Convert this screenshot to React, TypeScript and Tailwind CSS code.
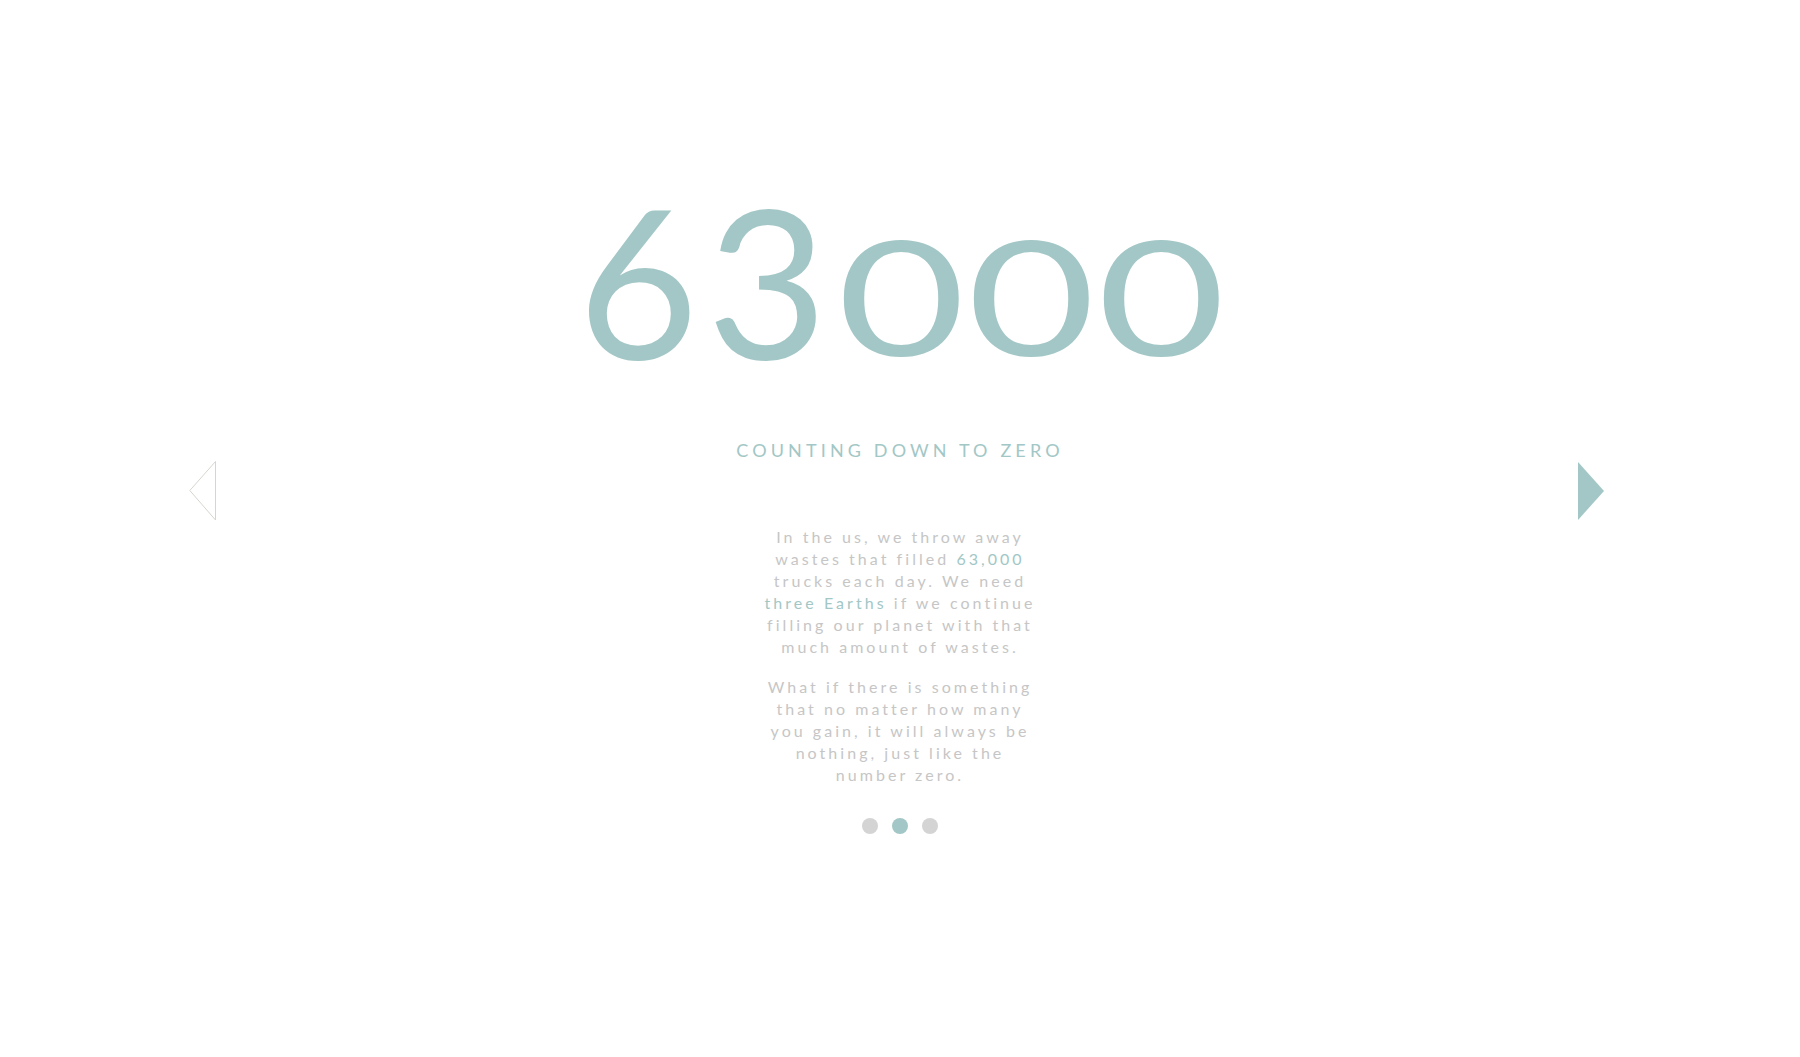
import React from "react";

const teal = "text-[#a2c7c6]";

function Zero() {
  return (
    <span className="flex w-[117px] justify-center">
      <span className="inline-block -translate-y-[3px] scale-x-[1.38] text-[160px] leading-none">0</span>
    </span>
  );
}

export default function App() {
  return (
    <div
      className="flex h-[1057px] w-full items-start bg-white pl-[189px] pr-[189px]"
      style={{ fontFamily: "Lato, 'Open Sans', sans-serif" }}
    >
      <div className="mt-[461px] w-[40px] shrink-0">
        <svg width="28" height="60" viewBox="0 0 28 60" className="block">
          <polygon points="26.5,0.5 0.8,29.5 26.5,59" fill="none" stroke="#d6d6cf" strokeWidth="1" />
        </svg>
      </div>

      <div className="flex flex-1 flex-col items-center pt-[175px]">
        <div className={`ml-[8px] flex items-baseline gap-[13px] ${teal} font-normal`}>
          <span className="mr-[15px] flex w-[100px] justify-center text-[208px] leading-none">6</span>
          <span className="mr-[12px] flex w-[102px] justify-center text-[208px] leading-none">3</span>
          <Zero />
          <Zero />
          <Zero />
        </div>

        <h2 className={`mt-[58px] text-[18px] leading-none tracking-[0.23em] ${teal}`}>
          COUNTING DOWN TO ZERO
        </h2>

        <div className="mt-[67px] text-center text-[16px] leading-[22px] tracking-[0.19em] text-[#c6c6c6]">
          <p className="mb-[18px]">
            <span className="block">In the us, we throw away</span>
            <span className="block">
              wastes that filled <span className={teal}>63,000</span>
            </span>
            <span className="block">trucks each day. We need</span>
            <span className="block">
              <span className={teal}>three Earths</span> if we continue
            </span>
            <span className="block">filling our planet with that</span>
            <span className="block">much amount of wastes.</span>
          </p>
          <p>
            <span className="block">What if there is something</span>
            <span className="block">that no matter how many</span>
            <span className="block">you gain, it will always be</span>
            <span className="block">nothing, just like the</span>
            <span className="block">number zero.</span>
          </p>
        </div>

        <div className="mt-[32px] flex gap-[14px]">
          <span className="h-[16px] w-[16px] rounded-full bg-[#d4d4d4]" />
          <span className="h-[16px] w-[16px] rounded-full bg-[#a2c7c6]" />
          <span className="h-[16px] w-[16px] rounded-full bg-[#d4d4d4]" />
        </div>
      </div>

      <div className="mt-[462px] flex w-[40px] shrink-0 justify-end pr-[7px]">
        <svg width="26" height="58" viewBox="0 0 26 58" className="block">
          <polygon points="0,0 26,29 0,58" fill="#a2c7c6" />
        </svg>
      </div>
    </div>
  );
}
